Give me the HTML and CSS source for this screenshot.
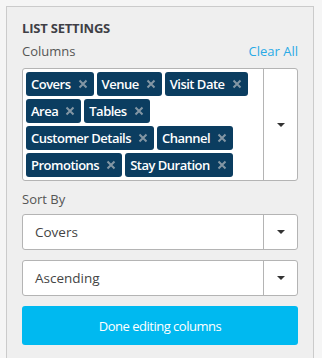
FILE: index.html
```html
<html>

<head>
  <title>List Settings</title>
  <link rel="stylesheet" href="styles.css">
</head>

<body>

  <div class="panel">
    <h3 class="title">LIST SETTINGS</h3>

    <div class="field-head">
      <span class="label">Columns</span>
      <a class="clear" href="#">Clear All</a>
    </div>

    <div class="multi">
      <div class="tags">
        <span class="tag">Covers<svg class="x" viewBox="0 0 10 10"><path d="M1.5 1.5l7 7M8.5 1.5l-7 7"/></svg></span>
        <span class="tag">Venue<svg class="x" viewBox="0 0 10 10"><path d="M1.5 1.5l7 7M8.5 1.5l-7 7"/></svg></span>
        <span class="tag">Visit Date<svg class="x" viewBox="0 0 10 10"><path d="M1.5 1.5l7 7M8.5 1.5l-7 7"/></svg></span>
        <span class="tag">Area<svg class="x" viewBox="0 0 10 10"><path d="M1.5 1.5l7 7M8.5 1.5l-7 7"/></svg></span>
        <span class="tag">Tables<svg class="x" viewBox="0 0 10 10"><path d="M1.5 1.5l7 7M8.5 1.5l-7 7"/></svg></span>
        <span class="tag">Customer Details<svg class="x" viewBox="0 0 10 10"><path d="M1.5 1.5l7 7M8.5 1.5l-7 7"/></svg></span>
        <span class="tag">Channel<svg class="x" viewBox="0 0 10 10"><path d="M1.5 1.5l7 7M8.5 1.5l-7 7"/></svg></span>
        <span class="tag">Promotions<svg class="x" viewBox="0 0 10 10"><path d="M1.5 1.5l7 7M8.5 1.5l-7 7"/></svg></span>
        <span class="tag">Stay Duration<svg class="x" viewBox="0 0 10 10"><path d="M1.5 1.5l7 7M8.5 1.5l-7 7"/></svg></span>
      </div>
      <div class="toggle"><span class="caret"></span></div>
    </div>

    <div class="label sort-label">Sort By</div>

    <div class="select">
      <div class="value">Covers</div>
      <div class="toggle"><span class="caret"></span></div>
    </div>

    <div class="select">
      <div class="value">Ascending</div>
      <div class="toggle"><span class="caret"></span></div>
    </div>

    <button class="done">Done editing columns</button>
  </div>

</body>

</html>
```

FILE: styles.css
```css
:root {
  --navy: #0b3d60;
  --blue: #00b9f0;
  --link: #2aaae6;
  --border: #b4b4b4;
  --text: #444;
}

* {
  margin: 0;
  padding: 0;
  box-sizing: border-box;
  font-family: "Open Sans", sans-serif;
}

body {
  background: #f5f5f5;
  color: var(--text);
}

.panel {
  margin: 6px 0 0 6px;
  width: 308px;
  height: 360px;
  background: #efefef;
  border: 1px solid #cbcbcb;
  border-bottom: none;
  padding: 12px 15px 0 15px;
}

.title {
  font-size: 13px;
  font-weight: 700;
  line-height: 18px;
  color: #3f3f46;
  letter-spacing: -0.2px;
}

.field-head {
  display: flex;
  justify-content: space-between;
  margin-top: 5px;
  margin-bottom: 8px;
}

.label {
  font-size: 13px;
  line-height: 18px;
  color: #555;
}

.clear {
  font-size: 13px;
  line-height: 18px;
  color: var(--link);
  text-decoration: none;
}

.multi {
  display: flex;
  background: #fff;
  border: 1px solid var(--border);
  border-radius: 3px;
  height: 113px;
}

.tags {
  flex: 1;
  display: flex;
  flex-wrap: wrap;
  align-content: flex-start;
  gap: 3px;
  padding: 3px;
  border-right: 1px solid var(--border);
}

.tag {
  display: inline-flex;
  align-items: center;
  height: 24px;
  padding: 0 6px 0 5px;
  background: var(--navy);
  color: #fff;
  font-size: 13px;
  font-weight: 600;
  border-radius: 3px;
  letter-spacing: -0.5px;
}

.x {
  width: 10px;
  height: 10px;
  margin-left: 7px;
  fill: none;
  stroke: #8396a4;
  stroke-width: 2;
}

.toggle {
  width: 33px;
  display: flex;
  align-items: center;
  justify-content: center;
}

.caret {
  width: 0;
  height: 0;
  border-left: 4px solid transparent;
  border-right: 4px solid transparent;
  border-top: 4px solid #333;
}

.sort-label {
  margin-top: 9px;
  margin-bottom: 6px;
}

.select {
  display: flex;
  height: 36px;
  background: #fff;
  border: 1px solid var(--border);
  border-radius: 3px;
  margin-bottom: 10px;
}

.select .value {
  flex: 1;
  display: flex;
  align-items: center;
  padding-left: 12px;
  font-size: 13.5px;
  color: #444;
  border-right: 1px solid var(--border);
}

.done {
  width: 100%;
  height: 39px;
  background: var(--blue);
  color: #fff;
  border: none;
  border-radius: 3px;
  font-size: 13px;
  letter-spacing: -0.5px;
}
```
